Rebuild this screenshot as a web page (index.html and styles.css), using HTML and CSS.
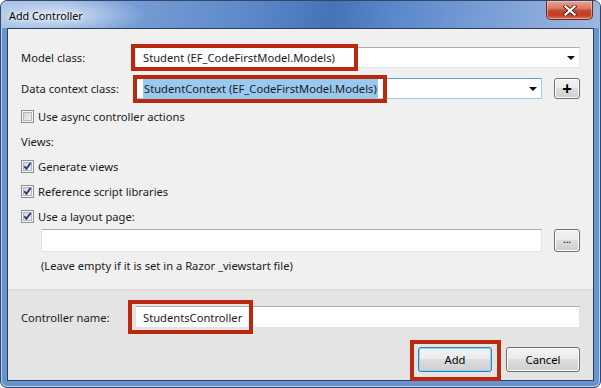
FILE: index.html
```html
<!DOCTYPE html>
<html lang="en">
<head>
    <meta charset="UTF-8">
    <title>Add Controller</title>
    <link rel="stylesheet" href="styles.css">
</head>
<body>
    <div class="window">
        <div class="titlebar">
            <span class="title">Add Controller</span>
            <span class="close-btn">
                <svg width="14" height="11" viewBox="0 0 14 11">
                    <path d="M2.5 1.5 L11.5 9.5 M11.5 1.5 L2.5 9.5" stroke="#5a2418" stroke-width="4" stroke-linecap="square"/>
                    <path d="M2.5 1.5 L11.5 9.5 M11.5 1.5 L2.5 9.5" stroke="#fff" stroke-width="2.2" stroke-linecap="square"/>
                </svg>
            </span>
        </div>

        <div class="client">
            <div class="main">
                <!-- Model / context pickers -->
                <div class="field-row">
                    <span class="field-label">Model class:</span>
                    <div class="combo combo-wide">
                        <span class="combo-text">Student (EF_CodeFirstModel.Models)</span>
                        <span class="arrow"></span>
                        <span class="mark mark-model"></span>
                    </div>
                </div>
                <div class="field-row row-context">
                    <span class="field-label">Data context class:</span>
                    <div class="combo combo-focus">
                        <span class="combo-text"><span class="selected">StudentContext (EF_CodeFirstModel.Models)</span></span>
                        <span class="arrow"></span>
                        <span class="mark mark-context"></span>
                    </div>
                    <span class="btn btn-small plus">+</span>
                </div>

                <div class="check-row row-async">
                    <span class="checkbox"></span>
                    <span>Use async controller actions</span>
                </div>
                <div class="check-row">
                    <span>Views:</span>
                </div>
                <div class="check-row">
                    <span class="checkbox">
                        <svg width="11" height="11" viewBox="0 0 11 11"><path d="M2.3 5.2 L4.4 7.8 L8.6 2" fill="none" stroke="#26337a" stroke-width="1.8"/></svg>
                    </span>
                    <span>Generate views</span>
                </div>
                <div class="check-row">
                    <span class="checkbox">
                        <svg width="11" height="11" viewBox="0 0 11 11"><path d="M2.3 5.2 L4.4 7.8 L8.6 2" fill="none" stroke="#26337a" stroke-width="1.8"/></svg>
                    </span>
                    <span>Reference script libraries</span>
                </div>
                <div class="check-row">
                    <span class="checkbox">
                        <svg width="11" height="11" viewBox="0 0 11 11"><path d="M2.3 5.2 L4.4 7.8 L8.6 2" fill="none" stroke="#26337a" stroke-width="1.8"/></svg>
                    </span>
                    <span>Use a layout page:</span>
                </div>

                <div class="layout-row">
                    <div class="textbox layout-box"></div>
                    <span class="btn btn-small dots">...</span>
                </div>
                <div class="hint">(Leave empty if it is set in a Razor _viewstart file)</div>
            </div>

            <div class="footer">
                <div class="field-row">
                    <span class="field-label">Controller name:</span>
                    <div class="textbox name-box">
                        <span class="combo-text">StudentsController</span>
                        <span class="mark mark-name"></span>
                    </div>
                </div>
                <div class="buttons">
                    <span class="btn btn-default">Add<span class="mark mark-add"></span></span>
                    <span class="btn">Cancel</span>
                </div>
            </div>
        </div>
    </div>
</body>
</html>
```

FILE: styles.css
```css
* {
    margin: 0;
    padding: 0;
    box-sizing: border-box;
}

body {
    font-family: "Noto Sans", "Open Sans", sans-serif;
    font-size: 11.2px;
    color: #1b1b1b;
    background: #fff;
}

.window {
    width: 601px;
    height: 388px;
    border: 1px solid #33476a;
    border-radius: 7px;
    background: #6793d1;
    box-shadow: inset 0 0 0 1px #b9d0ef;
    display: flex;
    flex-direction: column;
    overflow: hidden;
}

/* Aero title bar */
.titlebar {
    height: 27px;
    display: flex;
    justify-content: space-between;
    align-items: flex-start;
    padding: 0 7px 0 8px;
    background:
        radial-gradient(ellipse 90px 22px at 55px 14px, rgba(225,236,250,0.85), rgba(225,236,250,0)),
        linear-gradient(100deg, #9fbbe3 0%, #7aa0d6 18%, #5f8bcb 40%, #4673b8 55%, #5b89cb 66%, #7ba0d6 82%, #9cb7df 100%);
}

.title {
    align-self: center;
    margin-top: 2px;
    font-size: 10.8px;
    color: #000;
    text-shadow: 0 0 6px #fff, 0 0 3px #fff;
}

.close-btn {
    width: 47px;
    height: 19px;
    display: flex;
    align-items: center;
    justify-content: center;
    border: 1px solid #6b2a20;
    border-top: none;
    border-radius: 0 0 5px 5px;
    background: linear-gradient(#e9a495 0%, #d87a65 40%, #c5432a 55%, #c24027 80%, #d9735a 100%);
    box-shadow: inset 0 0 0 1px rgba(255,220,210,0.5);
}

.client {
    height: 353px;
    margin: 0 6px;
    border: 1px solid #2c3e5e;
    display: flex;
    flex-direction: column;
}

.main {
    height: 260px;
    background: #f0f0f0;
    padding: 18px 13px 0 13px;
    display: flex;
    flex-direction: column;
}

.field-row {
    display: flex;
    align-items: center;
    height: 21px;
}

.row-context {
    margin-top: 10px;
}

.field-label {
    width: 114px;
    flex-shrink: 0;
}

.combo,
.textbox {
    position: relative;
    height: 21px;
    background: #fff;
    border: 1px solid #dfe3ea;
    border-top-color: #abadb3;
    display: flex;
    align-items: center;
}

.combo {
    width: 408px;
}

.combo-wide {
    width: 445px;
}

.combo-focus {
    border-color: #a4c9e3;
    border-top-color: #6b9cc8;
}

.combo-text {
    padding-left: 7px;
    white-space: nowrap;
}

.selected {
    background: #99c9ef;
    padding: 2px 1px 3px 1px;
}

.arrow {
    margin-left: auto;
    margin-right: 4px;
    width: 0;
    height: 0;
    border-left: 4px solid transparent;
    border-right: 4px solid transparent;
    border-top: 4px solid #111;
}

.btn {
    position: relative;
    display: flex;
    align-items: center;
    justify-content: center;
    width: 74px;
    height: 25px;
    border: 1px solid #707070;
    border-radius: 3px;
    background: linear-gradient(#f2f2f2 0%, #ebebeb 50%, #dddddd 50%, #cfcfcf 100%);
    box-shadow: inset 0 0 0 1px #fcfcfc;
    color: #000;
}

.btn-small {
    width: 26px;
    height: 21px;
    margin-left: 12px;
}

.plus {
    font-size: 17px;
    font-weight: bold;
    line-height: 1;
}

.dots {
    height: 23px;
    font-size: 10px;
    padding-bottom: 4px;
}

.check-row {
    height: 25px;
    display: flex;
    align-items: center;
    gap: 4px;
}

.row-async {
    margin-top: 5px;
}

.checkbox {
    width: 13px;
    height: 13px;
    border: 1px solid #8e8f8f;
    background: linear-gradient(135deg, #cbced3, #f7f7f7);
    box-shadow: inset 0 0 0 1px #f4f4f4, inset 0 0 0 2px #b2b6bc;
    display: flex;
    align-items: center;
    justify-content: center;
}

.layout-row {
    display: flex;
    align-items: center;
    height: 23px;
    padding-left: 20px;
}

.layout-box {
    width: 502px;
    height: 23px;
}

.hint {
    height: 26px;
    display: flex;
    align-items: center;
    padding-left: 20px;
}

.footer {
    height: 91px;
    background: #e4e4e4;
    border-top: 1px solid #d6d6d6;
    padding: 16px 13px 0 13px;
}

.footer .field-row {
    height: 22px;
}

.name-box {
    width: 445px;
    height: 22px;
}

.buttons {
    display: flex;
    justify-content: flex-end;
    gap: 14px;
    margin-top: 19px;
}

.btn-default {
    border-color: #3c7fb1;
    box-shadow: inset 0 0 0 1px #7ddcf6;
}

/* red annotation frames drawn over the fields */
.mark {
    position: absolute;
    border: 4px solid #b8290e;
}

.mark-model {
    left: -5px;
    top: -4px;
    width: 227px;
    height: 27px;
}

.mark-context {
    left: -3px;
    top: -4px;
    width: 254px;
    height: 28px;
}

.mark-name {
    left: -8px;
    top: -7px;
    width: 125px;
    height: 34px;
}

.mark-add {
    left: -9px;
    top: -8px;
    width: 91px;
    height: 41px;
}
```
